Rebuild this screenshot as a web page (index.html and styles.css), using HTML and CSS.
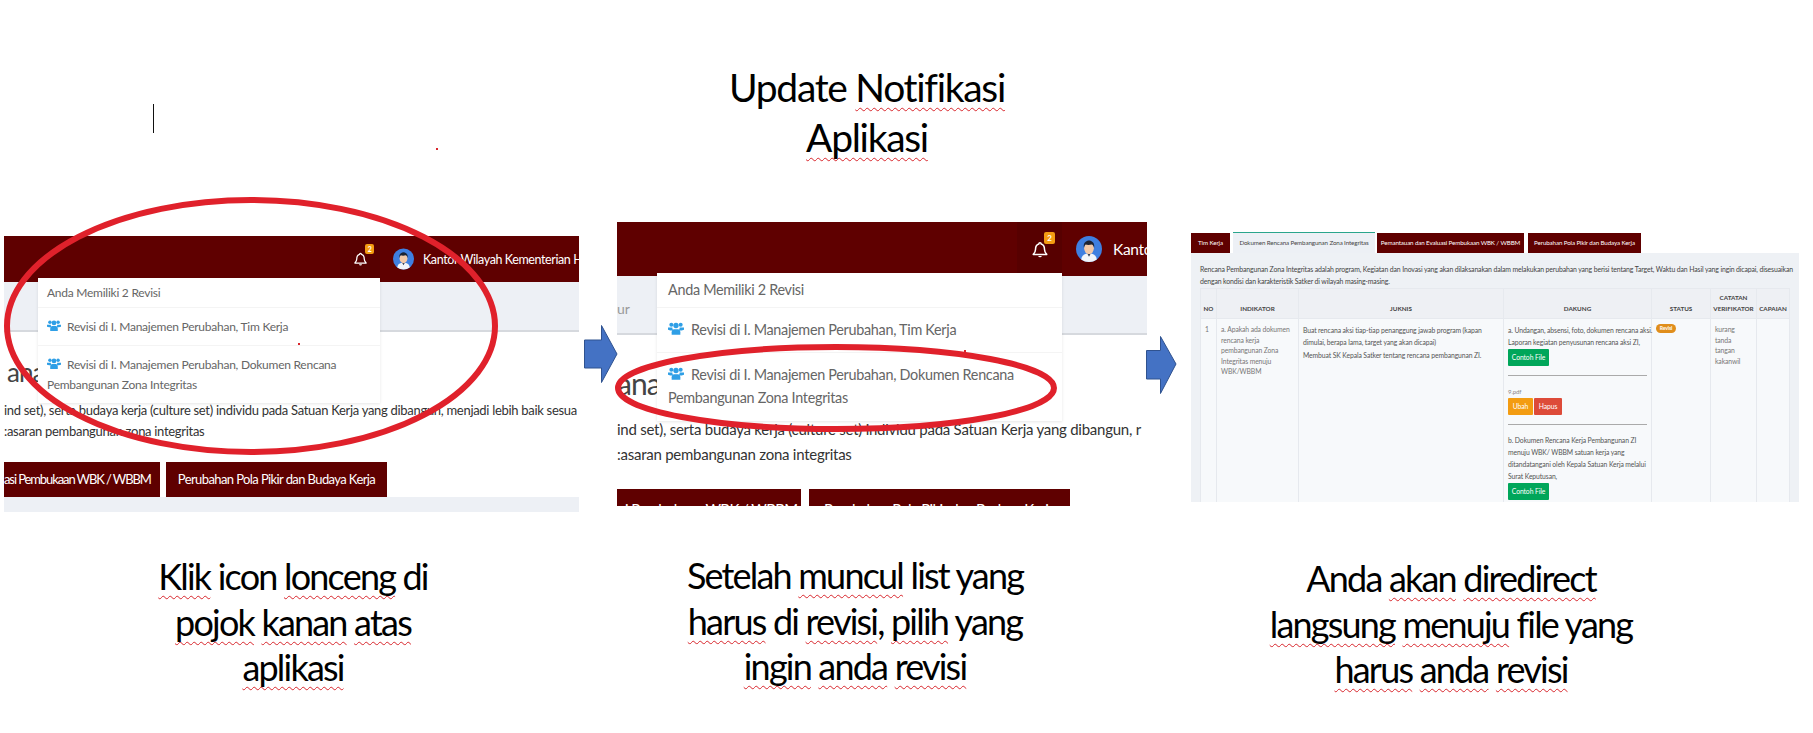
FILE: index.html
```html
<!DOCTYPE html>
<html lang="en">
<head>
  <meta charset="UTF-8">
  <title>Update Notifikasi Aplikasi</title>
  <link rel="stylesheet" href="styles.css">
</head>
<body>
  <svg width="0" height="0" class="defs">
    <symbol id="bell" viewBox="0 0 24 24">
      <path d="M12 3a1.4 1.4 0 0 1 1.4 1.6C17 5.400 18 8.500 18 12c0 3 1 4.500 3 6.500H3C5 16.500 6 15 6 12c0-3.500 1-6.600 4.600-7.400A1.400 1.400 0 0 1 12 3z" fill="none" stroke="#fff" stroke-width="2" stroke-linejoin="round"/>
      <path d="M9.500 20.500a2.600 2.600 0 0 0 5 0z" fill="#fff"/>
    </symbol>
    <symbol id="users" viewBox="0 0 24 20">
      <circle cx="5" cy="4.500" r="3"/>
      <circle cx="19" cy="4.500" r="3"/>
      <circle cx="12" cy="5.500" r="4"/>
      <path d="M0 8.500h6.500A6 6 0 0 0 8 13H3.500L0 12zM24 8.500h-6.500A6 6 0 0 1 16 13h4.500l3.500-1z"/>
      <path d="M5.500 19.500v-4c0-3 2-4.500 3.500-4.500h6c1.500 0 3.500 1.500 3.500 4.500v4z"/>
    </symbol>
    <symbol id="avatar" viewBox="0 0 40 40">
      <circle cx="20" cy="20" r="20" fill="#3f7fe0"/>
      <path d="M8 36c1-7 6-9 12-9s11 2 12 9a20 20 0 0 1-24 0z" fill="#f2f5fa"/>
      <path d="M17 26h6l-3 6z" fill="#24304a"/>
      <ellipse cx="20" cy="19" rx="7.500" ry="9" fill="#f3c9a8"/>
      <path d="M12 18c-1-8 4-11 8-11s9 3 8 11c-1-3-2-5-4-5-3 1-7 1-9 0-2 1-2 3-3 5z" fill="#1c2333"/>
    </symbol>
  </svg>

  <main class="slide">
    <h1 class="title"><span>Update <u>Notifikasi</u></span><span><u>Aplikasi</u></span></h1>
    <i class="cursor"></i>
    <i class="speck speck-a"></i>

    <!-- screenshot 1 -->
    <section class="shot shot-one">
      <header class="topbar">
        <div class="bell-box">
          <svg class="bell"><use href="#bell"/></svg>
          <b class="badge">2</b>
        </div>
        <svg class="avatar"><use href="#avatar"/></svg>
        <span class="username">Kantor Wilayah Kementerian Hu</span>
      </header>
      <div class="band"></div>
      <div class="page">
        <h2 class="heading">ana</h2>
        <p class="intro">ind set), serta budaya kerja (culture set) individu pada Satuan Kerja yang dibangun, menjadi lebih baik sesua<br>:asaran pembangunan zona integritas</p>
        <div class="btn-row">
          <a class="tab-btn first">asi Pembukaan WBK / WBBM</a>
          <a class="tab-btn second">Perubahan Pola Pikir dan Budaya Kerja</a>
        </div>
      </div>
      <div class="foot"></div>
      <div class="dropdown">
        <div class="drop-head">Anda Memiliki 2 Revisi</div>
        <div class="drop-item"><svg class="users"><use href="#users"/></svg>Revisi di I. Manajemen Perubahan, Tim Kerja</div>
        <div class="drop-item tall"><svg class="users"><use href="#users"/></svg>Revisi di I. Manajemen Perubahan, Dokumen Rencana<br>Pembangunan Zona Integritas</div>
        <i class="speck speck-b"></i>
      </div>
    </section>

    <!-- screenshot 2 -->
    <section class="shot shot-two">
      <header class="topbar">
        <div class="bell-box">
          <svg class="bell"><use href="#bell"/></svg>
          <b class="badge">2</b>
        </div>
        <svg class="avatar"><use href="#avatar"/></svg>
        <span class="username">Kanto</span>
      </header>
      <div class="band"><span class="crumb">ur</span></div>
      <div class="page">
        <h2 class="heading">ana</h2>
        <p class="intro">ind set), serta budaya kerja (culture set) individu pada Satuan Kerja yang dibangun, r<br>:asaran pembangunan zona integritas</p>
        <div class="btn-row">
          <a class="tab-btn first">i Pembukaan WBK / WBBM</a>
          <a class="tab-btn second">Perubahan Pola Pikir dan Budaya Kerja</a>
        </div>
      </div>
      <div class="dropdown">
        <div class="drop-head">Anda Memiliki 2 Revisi</div>
        <div class="drop-item"><svg class="users"><use href="#users"/></svg>Revisi di I. Manajemen Perubahan, Tim Kerja</div>
        <div class="drop-item tall"><svg class="users"><use href="#users"/></svg>Revisi di I. Manajemen Perubahan, Dokumen Rencana<br>Pembangunan Zona Integritas</div>
        <i class="speck speck-c"></i>
      </div>
    </section>

    <!-- screenshot 3 -->
    <section class="shot shot-three">
      <nav class="tabs">
        <a class="tab t1">Tim Kerja</a>
        <a class="tab t2 active">Dokumen Rencana Pembangunan Zona Integritas</a>
        <a class="tab t3">Pemantauan dan Evaluasi Pembukaan WBK / WBBM</a>
        <a class="tab t4">Perubahan Pola Pikir dan Budaya Kerja</a>
      </nav>
      <div class="tab-body">
        <p class="tab-intro">Rencana Pembangunan Zona Integritas adalah program, Kegiatan dan Inovasi yang akan dilaksanakan dalam melakukan perubahan yang berisi tentang Target, Waktu dan Hasil yang ingin dicapai, disesuaikan<br>dengan kondisi dan karakteristik Satker di wilayah masing-masing.</p>
        <table class="grid">
          <colgroup>
            <col class="c-no"><col class="c-ind"><col class="c-juk"><col class="c-dak"><col class="c-sta"><col class="c-cat"><col class="c-cap">
          </colgroup>
          <thead>
            <tr>
              <th>NO</th><th>INDIKATOR</th><th>JUKNIS</th><th>DAKUNG</th><th>STATUS</th><th>CATATAN VERIFIKATOR</th><th>CAPAIAN</th>
            </tr>
          </thead>
          <tbody>
            <tr>
              <td class="muted">1</td>
              <td class="muted">a. Apakah ada dokumen rencana kerja pembangunan Zona Integritas menuju WBK/WBBM</td>
              <td class="wide">Buat rencana aksi tiap-tiap penanggung jawab program (kapan dimulai, berapa lama, target yang akan dicapai)<br>Membuat SK Kepala Satker tentang rencana pembangunan ZI.</td>
              <td class="wide">
                <div class="dak-a">a. Undangan, absensi, foto, dokumen rencana aksi.<br>Laporan kegiatan penyusunan rencana aksi ZI,</div>
                <a class="mini green">Contoh File</a>
                <hr>
                <span class="file">9.pdf</span>
                <div class="mini-row"><a class="mini orange">Ubah</a><a class="mini red">Hapus</a></div>
                <hr>
                <div class="dak-b">b. Dokumen Rencana Kerja Pembangunan ZI menuju WBK/ WBBM satuan kerja yang ditandatangani oleh Kepala Satuan Kerja melalui Surat Keputusan,</div>
                <a class="mini green">Contoh File</a>
              </td>
              <td><b class="status">Revisi</b></td>
              <td class="muted">kurang tanda tangan kakanwil</td>
              <td></td>
            </tr>
          </tbody>
        </table>
      </div>
    </section>

    <svg class="ring ring-one" viewBox="0 0 500 262"><ellipse cx="248" cy="131" rx="244" ry="126"/></svg>
    <svg class="ring ring-two" viewBox="0 0 446 92"><ellipse cx="223" cy="46" rx="218" ry="41"/></svg>

    <svg class="arrow arrow-one" viewBox="0 0 34 58"><path d="M.5 15h17V.5L33 29 17.500 57.500V43H.5z"/></svg>
    <svg class="arrow arrow-two" viewBox="0 0 31 58"><path d="M.5 14.500h14V.5L30 28 14.500 57.500V43H.5z"/></svg>

    <p class="caption cap-one"><span><u>Klik</u> icon <u>lonceng</u> di</span><span><u>pojok</u> <u>kanan</u> <u>atas</u></span><span><u>aplikasi</u></span></p>
    <p class="caption cap-two"><span>Setelah <u>muncul</u> list yang</span><span><u>harus</u> di <u>revisi</u>, <u>pilih</u> yang</span><span><u>ingin</u> <u>anda</u> <u>revisi</u></span></p>
    <p class="caption cap-three"><span>Anda <u>akan</u> <u>diredirect</u></span><span><u>langsung</u> <u>menuju</u> file yang</span><span><u>harus</u> <u>anda</u> <u>revisi</u></span></p>
  </main>
</body>
</html>
```

FILE: styles.css
```css
* {
  box-sizing: border-box;
}

body {
  margin: 0;
  background: #fff;
  font-family: Lato, 'Noto Sans', sans-serif;
  overflow: hidden;
}

.defs {
  position: absolute;
}

/* the slide is a free canvas, items sit where the author dropped them */
.slide {
  position: relative;
  width: 1813px;
  height: 733px;
  overflow: hidden;
}

.title,
.caption {
  position: absolute;
  margin: 0;
  display: flex;
  flex-direction: column;
  align-items: center;
  font-weight: 400;
  font-size: 36px;
  color: #000;
  white-space: nowrap;
  transform: translateX(-50%);
  letter-spacing: -1.8px;
}

.title {
  left: 867px;
  top: 62px;
  line-height: 50px;
  font-size: 39px;
  letter-spacing: -1.300px;
}

.caption {
  line-height: 45.500px;
}

.cap-one {
  left: 293px;
  top: 554px;
}

.cap-two {
  left: 855px;
  top: 553px;
}

.cap-three {
  left: 1451px;
  top: 556px;
}

u {
  text-decoration: underline wavy #d8262c 1px;
  text-underline-offset: 5px;
  text-decoration-skip-ink: none;
}

.cursor {
  position: absolute;
  left: 153px;
  top: 104px;
  width: 1px;
  height: 29px;
  background: #111;
}

.speck {
  position: absolute;
  width: 2px;
  height: 2px;
  background: #d8262c;
}

.speck-a {
  left: 436px;
  top: 148px;
}

.speck-b {
  left: 260px;
  top: 65px;
}

.speck-c {
  left: 307px;
  top: 77px;
}

.shot {
  position: absolute;
  overflow: hidden;
  background: #fff;
}

.shot-one {
  left: 4px;
  top: 236px;
  width: 575px;
  height: 276px;
}

.shot-two {
  left: 617px;
  top: 222px;
  width: 530px;
  height: 284px;
}

.shot-three {
  left: 1191px;
  top: 232px;
  width: 608px;
  height: 270px;
}

.topbar {
  display: flex;
  align-items: center;
  background: #5f0000;
  color: #fff;
  white-space: nowrap;
}

.bell-box {
  position: relative;
  flex: none;
  display: flex;
  align-items: center;
  justify-content: center;
  align-self: stretch;
  background: #570000;
}

.bell {
  display: block;
}

.avatar {
  flex: none;
}

.badge {
  position: absolute;
  background: #f39c12;
  color: #fff;
  border-radius: 2px;
  text-align: center;
  font-weight: 700;
}

.band {
  background: #edf0f5;
  border-bottom: 2px solid #d6d9de;
}

.crumb {
  color: #999;
}

.heading {
  margin: 0;
  font-weight: 400;
  color: #444;
  white-space: nowrap;
}

.intro {
  margin: 0;
  color: #333;
  white-space: nowrap;
}

.btn-row {
  display: flex;
}

.tab-btn {
  display: block;
  flex: none;
  background: #5f0000;
  color: #fff;
  white-space: nowrap;
  text-align: center;
}

.foot {
  height: 16px;
  background: #edf0f5;
}

.dropdown {
  position: absolute;
  background: #fff;
  color: #666;
  box-shadow: 0 1px 3px rgba(0, 0, 0, 0.1);
  white-space: nowrap;
}

.drop-head,
.drop-item {
  display: block;
  border-bottom: 1px solid #f4f4f4;
}

.drop-item.tall {
  border-bottom: 0;
}

.users {
  fill: #2f9fe6;
  display: inline-block;
  vertical-align: -1px;
}

/* first screenshot */
.shot-one .topbar {
  height: 46px;
  font-size: 12.500px;
  letter-spacing: -0.4px;
}

.shot-one .bell-box {
  margin-left: 336px;
  width: 40px;
}

.shot-one .bell {
  width: 15px;
  height: 16px;
}

.shot-one .badge {
  left: 25px;
  top: 8px;
  width: 9px;
  height: 10px;
  font-size: 7px;
  line-height: 10px;
}

.shot-one .avatar {
  width: 21px;
  height: 22px;
  margin-left: 13px;
}

.shot-one .username {
  margin-left: 9px;
}

.shot-one .band {
  height: 50px;
}

.shot-one .page {
  padding-top: 26px;
}

.shot-one .heading {
  height: 28px;
  line-height: 28px;
  font-size: 26px;
  letter-spacing: -1px;
  padding-left: 3px;
}

.shot-one .intro {
  margin-top: 14px;
  font-size: 13px;
  line-height: 21px;
  letter-spacing: -0.3px;
}

.shot-one .btn-row {
  margin-top: 20px;
  gap: 6px;
}

.shot-one .tab-btn {
  height: 35px;
  line-height: 35px;
  font-size: 13px;
  letter-spacing: -0.6px;
}

.shot-one .first {
  width: 156px;
  text-align: left;
  letter-spacing: -1.100px;
}

.shot-one .second {
  width: 221px;
}

.shot-one .dropdown {
  left: 34px;
  top: 42px;
  width: 342px;
  font-size: 12px;
  letter-spacing: -0.25px;
}

.shot-one .drop-head,
.shot-one .drop-item {
  padding-left: 9px;
}

.shot-one .drop-head {
  height: 30px;
  line-height: 30px;
}

.shot-one .drop-item {
  height: 38px;
  line-height: 38px;
}

.shot-one .tall {
  height: 57px;
  line-height: 20px;
  padding-top: 9px;
}

.shot-one .users {
  width: 14px;
  height: 13px;
  margin-right: 6px;
}

/* second screenshot */
.shot-two .topbar {
  height: 54px;
  font-size: 15.500px;
  letter-spacing: -0.3px;
}

.shot-two .bell-box {
  margin-left: 400px;
  width: 45px;
}

.shot-two .bell {
  width: 18px;
  height: 19px;
}

.shot-two .badge {
  left: 27px;
  top: 10px;
  width: 11px;
  height: 12px;
  font-size: 8px;
  line-height: 12px;
}

.shot-two .avatar {
  width: 26px;
  height: 26px;
  margin-left: 14px;
}

.shot-two .username {
  margin-left: 11px;
}

.shot-two .band {
  height: 59px;
  padding-top: 24px;
  font-size: 14px;
}

.shot-two .page {
  padding-top: 32px;
}

.shot-two .heading {
  height: 32px;
  line-height: 32px;
  font-size: 30px;
  letter-spacing: -1px;
}

.shot-two .intro {
  margin-top: 18px;
  font-size: 15px;
  line-height: 25px;
  letter-spacing: -0.25px;
}

.shot-two .btn-row {
  margin-top: 22px;
  gap: 8px;
}

.shot-two .tab-btn {
  height: 41px;
  line-height: 41px;
  font-size: 15px;
  letter-spacing: -0.6px;
}

.shot-two .first {
  width: 184px;
  text-align: left;
  padding-left: 8px;
}

.shot-two .second {
  width: 261px;
}

.shot-two .dropdown {
  left: 40px;
  top: 51px;
  width: 405px;
  font-size: 14.400px;
  letter-spacing: -0.3px;
}

.shot-two .drop-head,
.shot-two .drop-item {
  padding-left: 11px;
}

.shot-two .drop-head {
  height: 35px;
  line-height: 34px;
}

.shot-two .drop-item {
  height: 45px;
  line-height: 44px;
}

.shot-two .tall {
  height: 68px;
  line-height: 23px;
  padding-top: 10px;
}

.shot-two .users {
  width: 16px;
  height: 15px;
  margin-right: 7px;
}

/* third screenshot */
.tabs {
  display: flex;
  align-items: flex-end;
  height: 21px;
  gap: 3px;
  font-size: 6.200px;
  letter-spacing: -0.1px;
  white-space: nowrap;
}

.tab {
  display: block;
  flex: none;
  height: 20px;
  line-height: 20px;
  text-align: center;
  background: #5f0000;
  color: #fff;
}

.tab.active {
  height: 21px;
  background: #edf0f5;
  color: #444;
  border-top: 1px solid #2aa58c;
}

.t1 {
  width: 39px;
}

.t2 {
  width: 142px;
}

.t3 {
  width: 147px;
  margin-left: -1px;
}

.t4 {
  width: 113px;
  margin-left: 1px;
}

.tab-body {
  height: 249px;
  padding: 10px 9px 0;
  background: #eef1f5;
  overflow: hidden;
}

.tab-intro {
  margin: 0;
  height: 25px;
  font-size: 6.900px;
  line-height: 12.400px;
  color: #444;
  white-space: nowrap;
  letter-spacing: -0.12px;
}

.grid {
  table-layout: fixed;
  width: 589px;
  border-collapse: collapse;
  font-size: 6.800px;
  letter-spacing: -0.1px;
  color: #555;
  background: #f7f9fb;
}

.c-no {
  width: 16px;
}

.c-ind {
  width: 82px;
}

.c-juk {
  width: 205px;
}

.c-dak {
  width: 148px;
}

.c-sta {
  width: 59px;
}

.c-cat {
  width: 46px;
}

.c-cap {
  width: 33px;
}

.grid th,
.grid td {
  border: 1px solid #e6e9ee;
  padding: 4px;
  vertical-align: top;
}

.grid th {
  height: 30px;
  background: #eef0f4;
  color: #444;
  font-size: 6.300px;
  line-height: 10.400px;
  vertical-align: bottom;
  padding: 2px 0 4px;
  letter-spacing: 0;
}

.grid td {
  line-height: 12.300px;
}

.grid td.muted {
  line-height: 10.600px;
  padding-top: 5px;
  color: #777;
}

.grid td.wide {
  padding-top: 5px;
}

.dak-a {
  white-space: nowrap;
}

.mini {
  display: block;
  width: fit-content;
  height: 17px;
  line-height: 17px;
  padding: 0 6px;
  border-radius: 1px;
  color: #fff;
  font-size: 6.800px;
}

.green {
  background: #00a65a;
  width: 41px;
  padding: 0;
  text-align: center;
}

.orange {
  background: #f39c12;
  width: 25px;
  padding: 0;
  text-align: center;
}

.red {
  background: #dd4b39;
  width: 28px;
  padding: 0;
  text-align: center;
}

.mini-row {
  display: flex;
  gap: 1px;
}

.grid hr {
  margin: 9px 0 10px;
  border: 0;
  border-top: 1px solid #aaa;
}

.file {
  display: block;
  font-size: 6px;
  color: #888;
  height: 12px;
}

.dak-b {
  margin-top: -1px;
}

.status {
  display: block;
  width: 20px;
  height: 9px;
  line-height: 9px;
  margin-top: 1px;
  border-radius: 5px;
  background: #e08e1b;
  color: #fff;
  text-align: center;
  font-size: 5px;
}

.ring {
  position: absolute;
  fill: none;
  stroke: #e0212b;
  stroke-width: 6;
}

.ring-one {
  left: 3px;
  top: 195px;
  width: 500px;
  height: 262px;
}

.ring-two {
  left: 613px;
  top: 342px;
  width: 446px;
  height: 92px;
}

.arrow {
  position: absolute;
  fill: #4472c4;
  stroke: #2f528f;
}

.arrow-one {
  left: 584px;
  top: 325px;
  width: 34px;
  height: 58px;
}

.arrow-two {
  left: 1146px;
  top: 336px;
  width: 31px;
  height: 58px;
}
```
